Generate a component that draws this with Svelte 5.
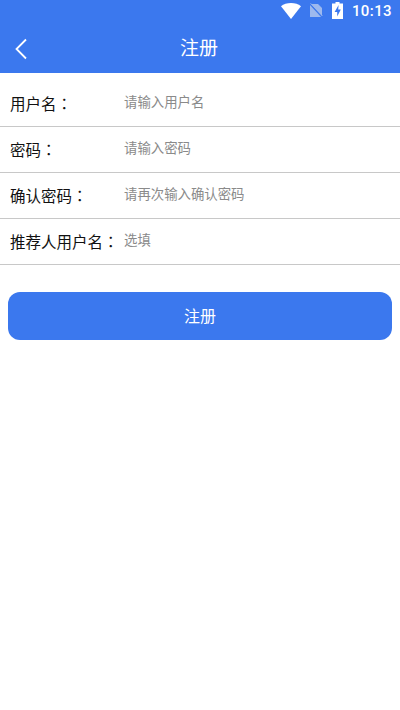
<script>
  const fields = [
    { label: '用户名', placeholder: '请输入用户名' },
    { label: '密码', placeholder: '请输入密码' },
    { label: '确认密码', placeholder: '请再次输入确认密码' },
    { label: '推荐人用户名', placeholder: '选填' }
  ];
</script>

<div class="page">
  <header class="top">
    <div class="status">
      <svg class="wifi" width="20" height="16" viewBox="0 0 20 16">
        <path d="M0 3.2C2.6 1.1 6.1 0 10 0s7.4 1.1 10 3.2L10 16z" fill="#fff" />
      </svg>
      <svg class="sim" width="14" height="15" viewBox="0 0 14 15">
        <path d="M1 1h8l4 4v9H1z" fill="#9db9ee" />
        <path d="M0.5 0.5L13.5 14.5" stroke="#3b78ee" stroke-width="1.4" />
        <path d="M1.5 0.2L13.5 13" stroke="#9db9ee" stroke-width="0.8" />
      </svg>
      <svg class="battery" width="11" height="17" viewBox="0 0 11 17">
        <path d="M3.5 0h4v1.5H11V17H0V1.5h3.5z" fill="#fff" />
        <path d="M6.6 3L2.6 10h2.6v4.6L8.8 7.6H6.2z" fill="#3b78ee" />
      </svg>
      <span class="time">10:13</span>
    </div>
    <div class="nav">
      <button class="back" aria-label="返回">
        <svg width="14" height="22" viewBox="0 0 14 22">
          <path d="M12 1.5L2.5 11l9.5 9.5" fill="none" stroke="#fff" stroke-width="1.8" />
        </svg>
      </button>
      <h1>注册</h1>
    </div>
  </header>

  <div class="form">
    {#each fields as f}
      <label class="row">
        <span class="label">{f.label}<span class="colon">：</span></span>
        <input type="text" placeholder={f.placeholder} />
      </label>
    {/each}
  </div>

  <button class="submit">注册</button>
</div>

<style>
  :global(body) {
    margin: 0;
    background: #fff;
  }

  .page {
    height: 710px;
    overflow: hidden;
    background: #fff;
    font-family: 'Liberation Sans', 'Noto Sans CJK SC', sans-serif;
  }

  .top {
    background: #3b78ee;
    height: 73px;
    color: #fff;
  }

  .status {
    height: 21px;
    display: flex;
    align-items: center;
    justify-content: flex-end;
    padding-right: 8px;
  }

  .wifi {
    margin-right: 8px;
  }

  .sim {
    margin-right: 9px;
  }

  .battery {
    margin-right: 9px;
  }

  .time {
    font-family: Roboto, sans-serif;
    font-size: 15px;
    font-weight: 500;
    letter-spacing: 0.4px;
  }

  .nav {
    height: 52px;
    display: flex;
    align-items: center;
    justify-content: center;
    position: relative;
  }

  .nav h1 {
    margin: 0 2px 2px 0;
    font-size: 19px;
    font-weight: 400;
  }

  .back {
    position: absolute;
    left: 14px;
    top: 17px;
    padding: 0;
    border: none;
    background: none;
    display: flex;
  }

  .form {
    padding-top: 8px;
  }

  .row {
    height: 45px;
    display: flex;
    align-items: center;
    padding-left: 10px;
    border-bottom: 1px solid #c8c8c8;
  }

  .label {
    width: 114px;
    flex-shrink: 0;
    margin-top: -2px;
    font-size: 15.5px;
    color: #111;
    white-space: nowrap;
  }

  .colon {
    font-family: 'Noto Sans CJK TC', sans-serif;
  }

  input {
    flex: 1;
    min-width: 0;
    border: none;
    outline: none;
    padding: 0;
    margin-top: -3px;
    font: inherit;
    font-size: 13.4px;
    background: none;
  }

  input::placeholder {
    color: #8a8a8a;
    opacity: 1;
  }

  .submit {
    display: block;
    width: 384px;
    height: 48px;
    margin: 27px 8px 0;
    padding: 0 0 2px;
    border: none;
    border-radius: 12px;
    background: #3b78ee;
    color: #fff;
    font: inherit;
    font-size: 16px;
  }
</style>
